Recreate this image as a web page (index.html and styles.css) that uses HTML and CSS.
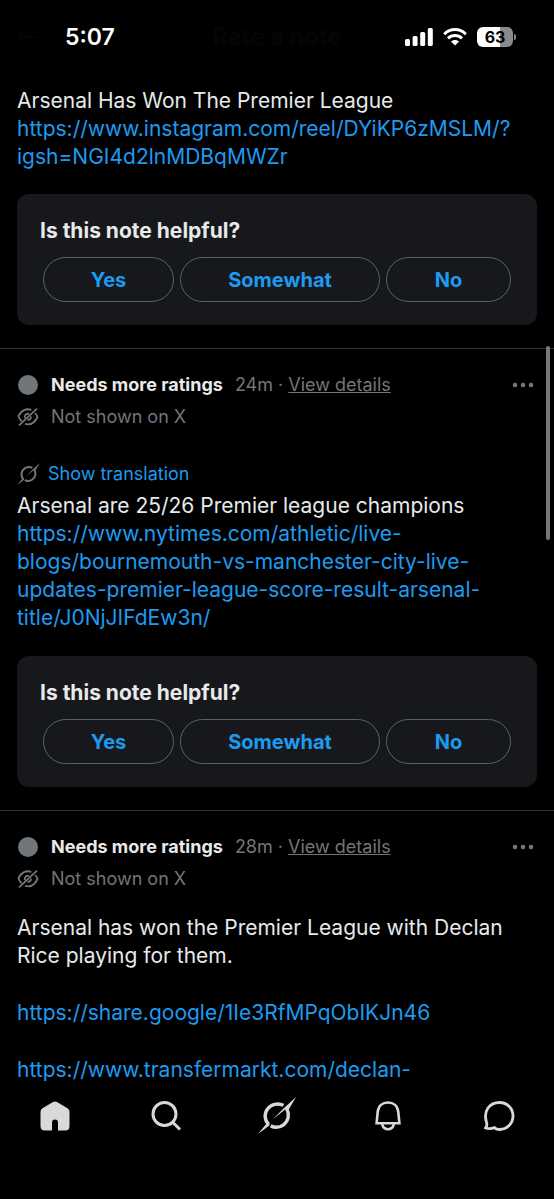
FILE: index.html
```html
<!DOCTYPE html>
<html lang="en">
<head>
<meta charset="utf-8">
<meta name="viewport" content="width=device-width, initial-scale=1">
<title>Rate a note</title>
<link rel="stylesheet" href="styles.css">
</head>
<body>
<svg class="sprite" aria-hidden="true">
  <symbol id="slash-ring" viewBox="0 0 38 37">
    <g fill="none" stroke="currentColor" stroke-width="3.400">
      <path d="M10.700 27.500C6.500 23.500 6 16.500 9.500 12C13 7.200 19.500 5.500 25.500 8.300"/>
      <path d="M28.700 11.500C31.800 17.500 30.500 24 25.500 27.800C21.500 30.700 16.800 30.900 12.700 28.900"/>
    </g>
    <path fill="currentColor" d="M14.500 22.500L25.500 11.500L38 0L30.500 13L27.500 12.200Z"/>
    <path fill="currentColor" d="M0 37L9.200 25.800L12 28Z"/>
  </symbol>
  <symbol id="eye-off" viewBox="0 0 22 20">
    <g fill="none" stroke="currentColor" stroke-width="1.800">
      <path d="M2 18.300L20 1.700"/>
      <path d="M14.300 3C9.500 1 4.200 3.200 1.500 9.200C2.200 11.400 3.200 12.900 4.700 14.200"/>
      <path d="M18.100 6C19.200 7.200 20 8.500 20.500 10C17.700 16.100 12.800 18.200 8 16.900"/>
      <path d="M7.900 11.300C6.900 8.300 9.500 6 12.100 7"/>
      <path d="M10.500 13C12.500 13 14 11.600 14 9.600"/>
    </g>
  </symbol>
  <symbol id="dots" viewBox="0 0 22 6">
    <circle cx="3" cy="3" r="2.300"/><circle cx="11" cy="3" r="2.300"/><circle cx="19" cy="3" r="2.300"/>
  </symbol>
</svg>

<div class="screen">
  <header class="status">
    <div class="start">
      <button class="back" aria-label="Back"><svg width="22" height="20" viewBox="0 0 22 20" fill="none" stroke="currentColor" stroke-width="2"><path d="M21 10H2M10 2L2 10L10 18"/></svg></button>
      <span class="clock">5:07</span>
    </div>
    <h1 class="title">Rate a note</h1>
    <div class="signals">
      <svg width="28" height="18" viewBox="0 0 28 18" fill="#fff" aria-hidden="true">
        <rect x="0" y="11" width="5" height="7" rx="1.500"/><rect x="7.600" y="8" width="5" height="10" rx="1.500"/><rect x="15.200" y="4" width="5" height="14" rx="1.500"/><rect x="22.800" y="0" width="5" height="18" rx="1.500"/>
      </svg>
      <svg width="24" height="18" viewBox="0 0 24 18" aria-hidden="true">
        <g fill="none" stroke="#fff" stroke-width="3"><path d="M1.200 6.200C7.500 0 16.500 0 22.800 6.200"/><path d="M5 10.400C9 6.600 15 6.600 19 10.400"/></g>
        <path fill="#fff" d="M12 17.500L7.900 13.500C10.200 11.400 13.800 11.400 16.100 13.500Z"/>
      </svg>
      <span class="battery"><span class="level">63</span></span>
    </div>
  </header>

  <main class="feed">
    <article class="note">
      <p class="text">Arsenal Has Won The Premier League <a href="#">https://www.instagram.com/reel/DYiKP6zMSLM/?igsh=NGI4d2lnMDBqMWZr</a></p>
      <section class="rate">
        <h2>Is this note helpful?</h2>
        <div class="choices"><button>Yes</button><button>Somewhat</button><button>No</button></div>
      </section>
    </article>

    <article class="note">
      <div class="meta">
        <span class="dot"></span><strong>Needs more ratings</strong><span class="age">24m · <a href="#">View details</a></span>
        <button class="more" aria-label="More"><svg width="22" height="6"><use href="#dots"/></svg></button>
      </div>
      <div class="hidden-row"><svg width="22" height="20"><use href="#eye-off"/></svg><span>Not shown on X</span></div>
      <button class="translate"><svg width="23" height="22"><use href="#slash-ring"/></svg><span>Show translation</span></button>
      <p class="text">Arsenal are 25/26 Premier league champions <a href="#">https://www.nytimes.com/athletic/live-blogs/bournemouth-vs-manchester-city-live-updates-premier-league-score-result-arsenal-title/J0NjJIFdEw3n/</a></p>
      <section class="rate">
        <h2>Is this note helpful?</h2>
        <div class="choices"><button>Yes</button><button>Somewhat</button><button>No</button></div>
      </section>
    </article>

    <article class="note">
      <div class="meta">
        <span class="dot"></span><strong>Needs more ratings</strong><span class="age">28m · <a href="#">View details</a></span>
        <button class="more" aria-label="More"><svg width="22" height="6"><use href="#dots"/></svg></button>
      </div>
      <div class="hidden-row"><svg width="22" height="20"><use href="#eye-off"/></svg><span>Not shown on X</span></div>
      <div class="paragraphs">
        <p class="text">Arsenal has won the Premier League with Declan Rice playing for them.</p>
        <p class="text"><a href="#">https://share.google/1Ie3RfMPqObIKJn46</a></p>
        <p class="text"><a href="#">https://www.transfermarkt.com/declan-</a></p>
      </div>
    </article>
  </main>
  <div class="scrollbar"></div>

  <nav class="tabs">
    <a href="#" aria-label="Home"><svg width="34" height="34" viewBox="0 0 34 34" fill="currentColor"><path d="M15 3.100Q17 1.900 19 3.100L29.500 9.300Q31.500 10.600 31.500 13V27Q31.500 31.500 27 31.500H20V23.500Q20 20.500 17 20.500Q14 20.500 14 23.500V31.500H7Q2.500 31.500 2.500 27V13Q2.500 10.600 4.500 9.300Z"/></svg></a>
    <a href="#" aria-label="Search"><svg width="34" height="34" viewBox="0 0 34 34" fill="none" stroke="currentColor" stroke-width="3"><circle cx="15.500" cy="15" r="11.500"/><path d="M23.500 23L31 30.500"/></svg></a>
    <a href="#" aria-label="Grok"><svg width="38" height="37"><use href="#slash-ring"/></svg></a>
    <a href="#" aria-label="Notifications"><svg width="34" height="34" viewBox="0 0 34 34" fill="none" stroke="currentColor" stroke-width="2.600"><path d="M5.600 24.300L6.700 13C7.300 7 11.500 3.500 17 3.500S26.700 7 27.300 13L28.400 24.300Z"/><path d="M11.200 25C12 32 22 32 22.800 25"/></svg></a>
    <a href="#" aria-label="Chat"><svg width="34" height="34" viewBox="0 0 34 34" fill="none" stroke="currentColor" stroke-width="2.800" stroke-linejoin="round"><path d="M4.300 22.500C1.200 12 7.500 3.500 17.500 3.500C25.500 3.500 31 9.600 31 17C31 24.500 25 30.500 17.500 30.500C15.500 30.500 13.500 30 12.500 28.500C9.500 29.900 6.500 30 3.500 29C5 27.500 5.100 25 4.300 22.500Z"/></svg></a>
  </nav>
</div>
</body>
</html>
```
FILE: styles.css
```css
* { box-sizing: border-box; }
body {
  margin: 0;
  background: #000;
  color: #e7e9ea;
  font-family: Inter, "Liberation Sans", sans-serif;
  font-size: 21px;
  line-height: 28px;
}
h1, h2, p { margin: 0; }
a { color: #1d9bf0; text-decoration: none; }
button { font: inherit; background: none; border: 0; padding: 0; }
svg { display: block; flex: none; }
.sprite { position: absolute; width: 0; height: 0; }

.screen { position: relative; height: 100vh; display: flex; flex-direction: column; }

.status {
  display: grid;
  grid-template-columns: 1fr auto 1fr;
  align-items: center;
  flex: none;
  height: 74px;
  padding: 0 17px;
}
.start { display: flex; align-items: center; gap: 26px; }
.back { color: #050505; }
.clock { color: #fff; font-size: 23px; font-weight: 600; }
.title { color: #050505; font-size: 24px; line-height: 28px; }
.signals { display: flex; justify-content: flex-end; align-items: center; gap: 10px; padding-right: 24px; }
.battery { position: relative; }
.level {
  display: block;
  width: 36px;
  border-radius: 6px;
  background: linear-gradient(90deg, #fff 63%, #8a8a8a 63%);
  color: #000;
  font-size: 16px;
  font-weight: 700;
  line-height: 20px;
  text-align: center;
}
.battery::after {
  content: "";
  position: absolute;
  left: 37px;
  top: 7px;
  width: 2px;
  height: 6px;
  border-radius: 0 2px 2px 0;
  background: #8a8a8a;
}

.feed { flex: 1; min-height: 0; overflow: hidden; }
.note { padding: 22px 17px 23px; border-bottom: 1px solid #2f3336; }
.note:first-child { padding-top: 13px; }
.note:first-child .rate { margin-top: 23px; }
.note:last-child { border-bottom: 0; }
.paragraphs { display: grid; gap: 29px; margin-top: 21px; }

.meta { display: flex; align-items: center; font-size: 18px; line-height: 28px; }
.dot { width: 20px; height: 20px; margin: 0 13px 0 1px; border-radius: 50%; background: #71767b; }
.meta strong { font-weight: 700; }
.age { margin-left: 12px; color: #71767b; }
.age a { color: inherit; text-decoration: underline; }
.more { margin-left: auto; padding: 8px 3px; }
.more svg { fill: #71767b; }
.hidden-row { display: flex; align-items: center; gap: 12px; margin-top: 4px; color: #71767b; font-size: 18px; line-height: 28px; }
.translate { display: flex; align-items: center; gap: 8px; margin: 29px 0 4px; color: #71767b; font-size: 18px; line-height: 28px; }
.translate span { color: #1d9bf0; }

.rate { margin-top: 24px; padding: 23px 23px; border-radius: 12px; background: #16181c; }
.rate h2 { font-size: 21px; line-height: 28px; }
.choices { display: grid; grid-template-columns: 131fr 200fr 125fr; gap: 6px; margin-top: 12px; padding: 0 3px; }
.choices button {
  height: 45px;
  border: 1px solid #536471;
  border-radius: 23px;
  color: #1d9bf0;
  font-size: 20px;
  font-weight: 700;
}

.scrollbar { position: absolute; right: 4px; top: 346px; width: 4px; height: 194px; border-radius: 2px; background: #77787a; }

.tabs { display: grid; grid-template-columns: repeat(5, 1fr); place-items: center; flex: none; height: 116px; padding: 14px 0 65px; }
.tabs a { color: #d9d9d9; }
```
